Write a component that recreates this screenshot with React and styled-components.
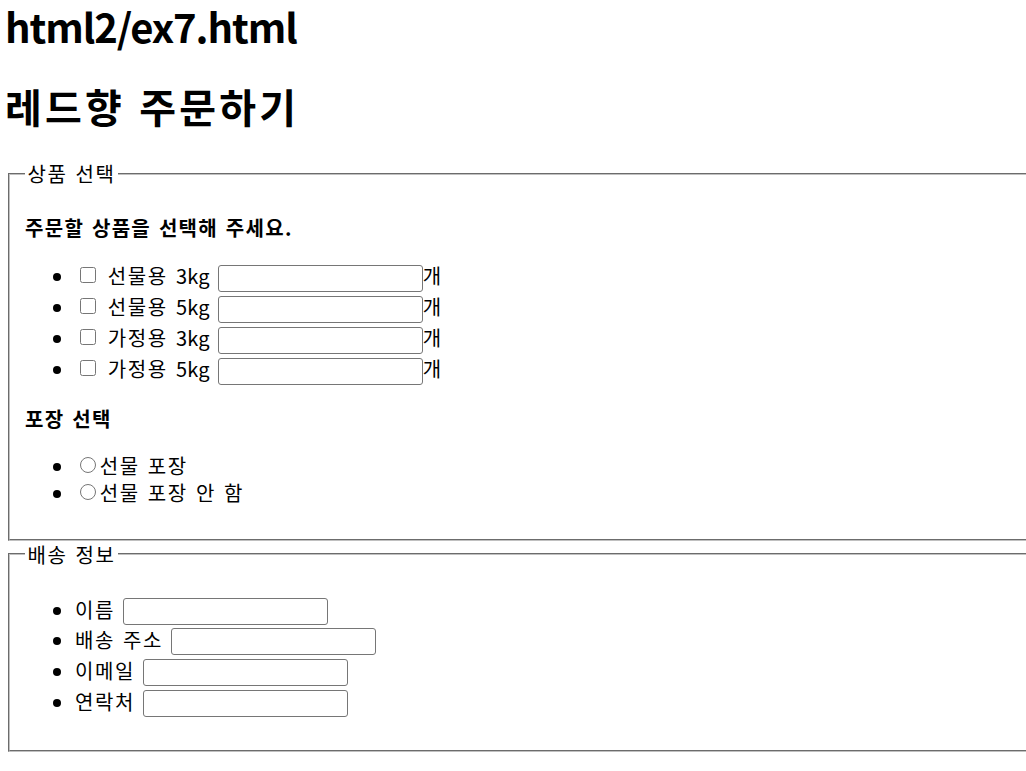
import React from "react";
import styled, { createGlobalStyle } from "styled-components";

const GlobalStyle = createGlobalStyle`
    html, body {
        margin: 0;
        padding: 0;
        overflow: hidden;
        background: #fff;
    }
    body {
        font-family: "Noto Sans CJK KR", "Noto Sans", sans-serif;
        font-size: 20px;
        color: #000;
        letter-spacing: 0.08em;
        word-spacing: 0.1em;
    }
`;

const Page = styled.div`
    width: 1026px;
    height: 771px;
    overflow: hidden;
    padding-left: 8px;
    box-sizing: border-box;
`;

const Heading = styled.h1`
    font-size: 40px;
    font-weight: bold;
    line-height: 53px;
    margin: ${(p) => (p.$first ? "0" : "27px")} 0 27px -3px;
    letter-spacing: ${(p) => (p.$latin ? "-1.1px" : "0.08em")};
`;

const Fieldset = styled.fieldset`
    width: 1100px;
    box-sizing: border-box;
    margin: 0;
    padding: 7px 15px 12.5px 15px;
    border: 2px groove #c0c0c0;
`;

const Legend = styled.legend`
    padding: 0 2.5px;
    font-size: 20px;
    line-height: 27px;
`;

const Lead = styled.p`
    font-weight: bold;
    line-height: 27px;
    margin: 20px 0;
    letter-spacing: 0.065em;
`;

const List = styled.ul`
    margin: 20px 0;
    padding-left: 50px;
    list-style: disc;
`;

const Item = styled.li`
    line-height: ${(p) => (p.$tall ? "30.7px" : "27px")};
    white-space: nowrap;
`;

const Weight = styled.span`
    letter-spacing: 0.01em;
`;

const Check = styled.input.attrs({ type: "checkbox" })`
    width: 16px;
    height: 16px;
    margin: 6px 3.75px 0 5px;
    vertical-align: top;
`;

const Radio = styled.input.attrs({ type: "radio" })`
    width: 16px;
    height: 16px;
    margin: 5px 3.75px 0 5px;
    vertical-align: top;
`;

const TextBox = styled.input.attrs({ type: "text" })`
    width: 205px;
    height: 27px;
    box-sizing: border-box;
    margin: ${(p) => p.$top || "4px"} 0 0 0;
    padding: 0 2px;
    border: 1px solid #767676;
    border-radius: 3px;
    vertical-align: top;
    font-size: 16px;
`;

const products = [
    { kind: "선물용", weight: "3kg" },
    { kind: "선물용", weight: "5kg" },
    { kind: "가정용", weight: "3kg" },
    { kind: "가정용", weight: "5kg" },
];
const wraps = ["선물 포장", "선물 포장 안 함"];
const fields = ["이름", "배송 주소", "이메일", "연락처"];

export default function App() {
    return (
        <>
            <GlobalStyle />
            <Page>
                <Heading $first $latin>html2/ex7.html</Heading>
                <Heading>레드향 주문하기</Heading>

                <Fieldset>
                    <Legend>상품 선택</Legend>
                    <Lead>주문할 상품을 선택해 주세요.</Lead>
                    <List>
                        {products.map((p) => (
                            <Item $tall key={p.kind + p.weight}>
                                <Check /> {p.kind} <Weight>{p.weight}</Weight> <TextBox />개
                            </Item>
                        ))}
                    </List>
                    <Lead>포장 선택</Lead>
                    <List>
                        {wraps.map((name) => (
                            <Item key={name}>
                                <Radio name="wrap" />{name}
                            </Item>
                        ))}
                    </List>
                </Fieldset>

                <Fieldset>
                    <Legend>배송 정보</Legend>
                    <List>
                        {fields.map((name) => (
                            <Item $tall key={name}>
                                {name} <TextBox $top="3px" />
                            </Item>
                        ))}
                    </List>
                </Fieldset>
            </Page>
        </>
    );
}
